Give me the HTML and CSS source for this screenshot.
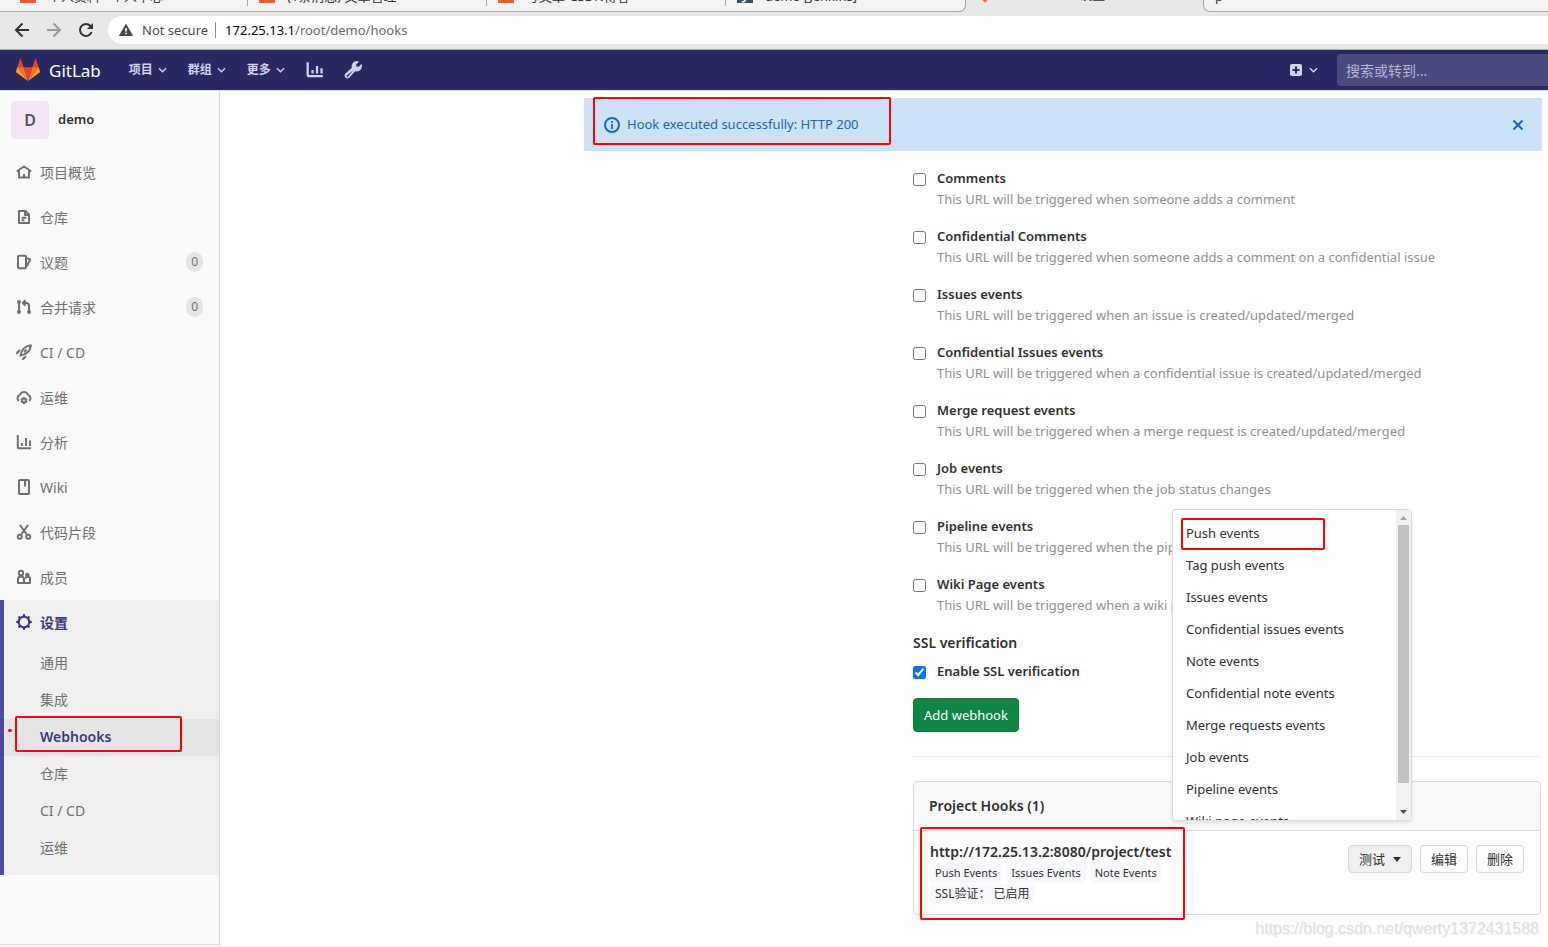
FILE: index.html
```html
<!DOCTYPE html>
<html lang="zh-CN">
<head>
<meta charset="utf-8">
<title>Webhooks · 设置 · demo</title>
<link rel="stylesheet" href="styles.css">
</head>
<body>
<header class="browser">
  <div class="tabs">
    <div class="tab-group tab-group-left">
      <div class="tab"><span class="favicon">C</span><span>个人资料 - 个人中心</span></div>
      <div class="tab"><span class="favicon">C</span><span>(1条消息) 文章管理</span></div>
      <div class="tab"><span class="favicon">C</span><span>写文章-CSDN博客</span></div>
      <div class="tab"><span class="favicon favicon-dark">J</span><span>demo [Jenkins]</span></div>
    </div>
    <div class="tab tab-active"><span class="favicon-diamond"></span><span>Webhooks · 设置 ·</span></div>
    <div class="tab-group tab-group-right"><div class="tab"><span>p</span></div></div>
  </div>
  <div class="toolbar">
    <button class="tool" aria-label="Back"><svg width="16" height="16" viewBox="0 0 16 16" fill="none" stroke="#2e3436" stroke-width="2"><path d="M15 8H2M8.500 1.500 2 8l6.500 6.500"/></svg></button>
    <button class="tool" aria-label="Forward"><svg width="16" height="16" viewBox="0 0 16 16" fill="none" stroke="#989896" stroke-width="2"><path d="M1 8h13M7.500 1.500 14 8l-6.500 6.500"/></svg></button>
    <button class="tool" aria-label="Reload"><svg width="16" height="16" viewBox="0 0 16 16" fill="none" stroke="#2e3436" stroke-width="2"><path d="M13.600 10A6 6 0 1 1 12.500 4L14 5.500"/><path d="M15 1v6H9z" fill="#2e3436" stroke="none"/></svg></button>
    <div class="omnibox">
      <svg width="16" height="16" viewBox="0 0 16 16"><path fill="#4a4a4a" d="M8 1.500 15.200 14H.8z"/><path stroke="#fff" stroke-width="1.600" d="M8 6v3.500M8 10.700v1.500"/></svg>
      <span class="secure">Not secure</span>
      <span class="url"><b>172.25.13.1</b>/root/demo/hooks</span>
    </div>
  </div>
</header>

<nav class="navbar">
  <a class="brand" href="#">
    <svg width="24" height="24" viewBox="0 0 36 36"><path fill="#e24329" d="m2 14 9.380 9v-9l-4-12.280c-.205-.632-1.176-.632-1.380 0z"/><path fill="#e24329" d="m34 14-9.380 9v-9l4-12.280c.205-.632 1.176-.632 1.380 0z"/><path fill="#e24329" d="M18 34.380 11.380 14h13.240z"/><path fill="#fc6d26" d="M18 34.380 11.380 14H2l6 7.500zM18 34.380 24.620 14H34l-6 7.500z"/><path fill="#fca326" d="M2 14 .1 20.160c-.18.565 0 1.200.5 1.560L18 34.380zM34 14l1.900 6.160c.18.565 0 1.200-.5 1.560L18 34.380z"/></svg>
    <span>GitLab</span>
  </a>
  <button class="menu">项目<svg class="chev" viewBox="0 0 10 6"><path d="m1 1 4 4 4-4"/></svg></button>
  <button class="menu">群组<svg class="chev" viewBox="0 0 10 6"><path d="m1 1 4 4 4-4"/></svg></button>
  <button class="menu">更多<svg class="chev" viewBox="0 0 10 6"><path d="m1 1 4 4 4-4"/></svg></button>
  <a class="nav-icon" href="#" aria-label="分析"><svg class="line" width="18" height="18" viewBox="0 0 16 16"><path d="M1.500 1v11.500a1 1 0 0 0 1 1H15M5.800 8v3M9.800 4.500V11M13.800 6.500V11"/></svg></a>
  <a class="nav-icon" href="#" aria-label="管理"><svg width="18" height="18" viewBox="0 0 16 16"><path fill="currentColor" fill-rule="evenodd" d="M11.300 0c.9 0 1.500.2 2 .6L10.800 3l.3 1.900 1.900.3 2.400-2.500c.4.6.6 1.200.6 2A4.700 4.700 0 0 1 9.900 9L4.600 14.800a2.500 2.500 0 0 1-3.500-3.500L7 6.100A4.700 4.700 0 0 1 11.300 0zM8 8.500 2.500 12.900a.7.700 0 0 0 1 1z"/></svg></a>
  <button class="menu plus" aria-label="新建"><svg width="12" height="12" viewBox="0 0 12 12"><rect width="12" height="12" rx="2" fill="currentColor"/><path stroke="#292961" stroke-width="2" d="M6 2.500v7M2.500 6h7"/></svg><svg class="chev" viewBox="0 0 10 6"><path d="m1 1 4 4 4-4"/></svg></button>
  <input class="search" type="search" aria-label="搜索" placeholder="搜索或转到...">
</nav>

<div class="layout">
  <aside class="sidebar">
    <a class="project" href="#"><span class="avatar">D</span><span>demo</span></a>
    <a class="item" href="#"><svg class="line" viewBox="0 0 16 16"><path d="M.8 7.500 8 2.500l7.200 5M3 7v6.500h10V7M8 13.500V10"/></svg>项目概览</a>
    <a class="item" href="#"><svg class="line" viewBox="0 0 16 16"><path d="M3 2h6.500L13 5.500V14H3zM9 2v4h4M5.500 8.700h5M5.500 11.200h3"/></svg>仓库</a>
    <a class="item" href="#"><svg class="line" viewBox="0 0 16 16"><path d="M2 2.800a1 1 0 0 1 1-1h6a1 1 0 0 1 1 1v10.400a1 1 0 0 1-1 1H3a1 1 0 0 1-1-1zM10.500 4l3.700 1.500L11 12"/></svg>议题<span class="badge">0</span></a>
    <a class="item" href="#"><svg class="line" viewBox="0 0 16 16"><path d="M3 3v10M13 13V7a3 3 0 0 0-3-3H7.500M9.500 1.200 6.800 4l2.700 2.800"/><g fill="currentColor" stroke="none"><circle cx="3" cy="3" r="2"/><circle cx="3" cy="13" r="2"/><circle cx="13" cy="13" r="2"/></g></svg>合并请求<span class="badge">0</span></a>
    <a class="item" href="#"><svg class="line" viewBox="0 0 16 16"><path d="M4.500 11.500C5 6 9 2 14.800 1.200 14.500 7 10 11 4.500 11.500zM8 8l2.500-2.500"/><path fill="currentColor" stroke="none" d="M0 10c0-2.500 2-4.500 4.800-4.500L2.800 9 .8 10.200zM6 16c2.500 0 4.500-2 4.500-4.800L7 13.200 5.800 15z"/></svg>CI / CD</a>
    <a class="item" href="#"><svg class="line" viewBox="0 0 16 16"><path d="M3 11.800A3.200 3.200 0 0 1 3.800 6a4.500 4.500 0 0 1 8.400 0 3.200 3.200 0 0 1 .8 5.800"/><circle cx="8" cy="11.500" r="2"/><path d="M8 8v1.500M8 13.500V15M5 9.800l1.200.7M9.800 12.500l1.200.7M5 13.200l1.200-.7M9.800 10.500l1.200-.7"/></svg>运维</a>
    <a class="item" href="#"><svg class="line" viewBox="0 0 16 16"><path d="M1.800 1v12.200a1 1 0 0 0 1 1H15M6 9v3M10 4v8M14 6.500V12"/></svg>分析</a>
    <a class="item" href="#"><svg class="line" viewBox="0 0 16 16"><rect x="3" y="1" width="10" height="14" rx="1"/><path d="M9 1v6.500"/></svg>Wiki</a>
    <a class="item" href="#"><svg class="line" viewBox="0 0 16 16"><circle cx="3.800" cy="12.800" r="2"/><circle cx="12.200" cy="12.800" r="2"/><path d="M4 1l7.200 10M12 1 4.800 11"/></svg>代码片段</a>
    <a class="item" href="#"><svg class="line" viewBox="0 0 16 16"><circle cx="5" cy="4" r="2.200"/><path d="M2 14v-3.500a3 3 0 0 1 6 0V14zM9.500 9.500a2.200 2.200 0 0 1 4.500 1V14H8"/><circle cx="11.300" cy="6" r="1.200"/></svg>成员</a>
    <div class="section">
      <a class="item item-current" href="#"><svg viewBox="0 0 16 16" fill="none" stroke="currentColor"><circle cx="8" cy="8" r="5.300" stroke-width="2"/><path stroke-width="2.400" stroke-linecap="round" d="M8 1.300v.7M8 14v.7M1.300 8H2M14 8h.7M3.300 3.300l.5.5M12.200 12.200l.5.5M3.300 12.700l.5-.5M12.200 3.800l.5-.5"/></svg>设置</a>
      <a class="sub" href="#">通用</a>
      <a class="sub" href="#">集成</a>
      <a class="sub sub-current" href="#">Webhooks<span class="mark mark-sub"></span><span class="dot"></span></a>
      <a class="sub" href="#">仓库</a>
      <a class="sub" href="#">CI / CD</a>
      <a class="sub" href="#">运维</a>
    </div>
    <div class="sidebar-foot"></div>
  </aside>

  <main class="main">
    <div class="container">
      <div class="flash" role="status">
        <svg width="16" height="16" viewBox="0 0 16 16" fill="none" stroke="currentColor" stroke-width="2"><circle cx="8" cy="8" r="7"/><path d="M8 7v5M8 4v2" stroke-width="1.800"/></svg>
        <span>Hook executed successfully: HTTP 200</span>
        <button class="close" aria-label="关闭"><svg width="12" height="12" viewBox="0 0 12 12" stroke="currentColor" stroke-width="2"><path d="m1.500 1.500 9 9M10.500 1.500l-9 9"/></svg></button>
        <span class="mark mark-flash"></span>
      </div>
      <div class="column">
        <div class="clipped"><p class="desc">This URL will be triggered by a push to the repository</p></div>
        <div class="event"><input type="checkbox" id="e0"><label for="e0">Tag push events</label><p class="desc">This URL will be triggered when a new tag is pushed to the repository</p></div>
        <div class="event"><input type="checkbox" id="e1"><label for="e1">Comments</label><p class="desc">This URL will be triggered when someone adds a comment</p></div>
        <div class="event"><input type="checkbox" id="e2"><label for="e2">Confidential Comments</label><p class="desc">This URL will be triggered when someone adds a comment on a confidential issue</p></div>
        <div class="event"><input type="checkbox" id="e3"><label for="e3">Issues events</label><p class="desc">This URL will be triggered when an issue is created/updated/merged</p></div>
        <div class="event"><input type="checkbox" id="e4"><label for="e4">Confidential Issues events</label><p class="desc">This URL will be triggered when a confidential issue is created/updated/merged</p></div>
        <div class="event"><input type="checkbox" id="e5"><label for="e5">Merge request events</label><p class="desc">This URL will be triggered when a merge request is created/updated/merged</p></div>
        <div class="event"><input type="checkbox" id="e6"><label for="e6">Job events</label><p class="desc">This URL will be triggered when the job status changes</p></div>
        <div class="event"><input type="checkbox" id="e7"><label for="e7">Pipeline events</label><p class="desc">This URL will be triggered when the pipeline status changes</p></div>
        <div class="event"><input type="checkbox" id="e8"><label for="e8">Wiki Page events</label><p class="desc">This URL will be triggered when a wiki page is created/updated</p></div>
        <h2 class="heading">SSL verification</h2>
        <div class="event"><input type="checkbox" id="ssl" checked><label for="ssl">Enable SSL verification</label></div>
        <button class="add">Add webhook</button>
        <hr>
        <section class="card">
          <h2 class="card-head">Project Hooks (1)</h2>
          <div class="card-body">
            <div class="hook">
              <div class="hook-url">http://172.25.13.2:8080/project/test</div>
              <div class="chips"><span class="chip">Push Events</span><span class="chip">Issues Events</span><span class="chip">Note Events</span></div>
              <div class="chips"><span class="chip chip-cjk">SSL验证： 已启用</span></div>
              <span class="mark mark-hook"></span>
            </div>
            <div class="actions">
              <div class="test">
                <button class="btn btn-open">测试<svg width="8" height="5" viewBox="0 0 8 5"><path fill="currentColor" d="M0 0h8L4 5z"/></svg></button>
                <div class="dropdown">
                  <div class="options">
                    <a href="#">Push events<span class="mark mark-option"></span></a>
                    <a href="#">Tag push events</a>
                    <a href="#">Issues events</a>
                    <a href="#">Confidential issues events</a>
                    <a href="#">Note events</a>
                    <a href="#">Confidential note events</a>
                    <a href="#">Merge requests events</a>
                    <a href="#">Job events</a>
                    <a href="#">Pipeline events</a>
                    <a href="#">Wiki page events</a>
                  </div>
                  <div class="scroll">
                    <svg width="15" height="15" viewBox="0 0 15 15"><path fill="#a3a3a3" d="M4 10h7L7.500 6z"/></svg>
                    <div class="thumb"></div>
                    <svg width="15" height="15" viewBox="0 0 15 15"><path fill="#505050" d="M4 5h7L7.500 9z"/></svg>
                  </div>
                </div>
              </div>
              <button class="btn">编辑</button>
              <button class="btn">删除</button>
            </div>
          </div>
        </section>
      </div>
    </div>
    <div class="watermark">https://blog.csdn.net/qwerty1372431588</div>
  </main>
</div>
</body>
</html>
```
FILE: styles.css
```css
* { box-sizing: border-box; }
body {
  margin: 0;
  min-height: 100vh;
  display: flex;
  flex-direction: column;
  overflow: hidden;
  background: #fff;
  color: #303030;
  font: 14px/21px "Noto Sans", "Noto Sans CJK SC", sans-serif;
}
a { color: inherit; text-decoration: none; }
button, input { font: inherit; color: inherit; margin: 0; }
button { border: 0; background: none; padding: 0; }
h2, p { margin: 0; font-size: 14px; }

/* browser chrome */
.browser { background: #e8e8e6; border-bottom: 1px solid #b0b0ac; }
.tabs { display: flex; height: 12px; overflow: hidden; }
.tab-group { display: flex; background: #f3f3f3; border-bottom: 1px solid #a5a5a1; }
.tab-group-left { padding-left: 9px; border-right: 1px solid #a5a5a1; border-bottom-right-radius: 7px; }
.tab-group-right { flex: 1; border-left: 1px solid #a5a5a1; border-bottom-left-radius: 7px; }
.tab {
  width: 239px;
  height: 6px;
  padding-left: 11px;
  display: flex;
  align-items: flex-end;
  gap: 12px;
  font-size: 13px;
  line-height: 20px;
  white-space: nowrap;
  color: #2e3436;
}
.tab-group-left .tab:not(:last-child) { border-right: 1px solid #a5a5a1; }
.tab-active { width: 237px; height: 4px; }
.favicon { width: 16px; height: 16px; margin-bottom: 3px; background: #fc5531; color: #fff; line-height: 16px; text-align: center; font-weight: 700; }
.favicon-dark { background: #335061; }
.favicon-diamond { width: 8px; height: 8px; margin: 0 4px 3px; background: #fc6d26; transform: rotate(45deg); }
.toolbar { display: flex; align-items: center; height: 37px; padding: 0 0 1px 14px; gap: 16px; }
.tool { display: flex; }
.omnibox { flex: 1; height: 28px; margin-left: -2px; padding-left: 10px; display: flex; align-items: center; background: #fff; border-radius: 14px 0 0 14px; font-size: 13px; }
.secure { margin-left: 8px; padding-right: 7px; line-height: 16px; border-right: 1px solid #8a8a88; color: #4a4a4a; }
.url { margin-left: 9px; color: #6a6a6a; }
.url b { font-weight: 400; color: #000; }

/* top navigation */
.navbar { display: flex; align-items: center; height: 40px; padding-left: 16px; background: #292961; color: #d1d1f0; }
.brand { display: flex; align-items: center; gap: 9px; color: #fff; font-size: 17px; margin-right: 28px; }
.menu { display: flex; align-items: center; gap: 5px; margin-right: 21px; font-size: 12px; line-height: 20px; font-weight: 700; }
.chev { width: 9px; height: 6px; fill: none; stroke: currentColor; stroke-width: 1.500; }
.nav-icon { display: flex; margin-right: 20px; }
.line { fill: none; stroke: currentColor; stroke-width: 2; stroke-linejoin: round; }
.plus { margin: 0 19px 0 auto; gap: 7px; }
.search { width: 211px; height: 32px; padding: 0 9px; border: 0; border-radius: 4px 0 0 4px; background: #4b4b7d; }
.search::placeholder { color: #b5b5d3; opacity: 1; }

.layout { flex: 1; display: flex; border-top: 1px solid #dfdfdf; }

/* sidebar */
.sidebar { width: 220px; display: flex; flex-direction: column; background: #fafafa; border-right: 1px solid #dbdbdb; color: #707070; }
.project { display: flex; align-items: center; gap: 9px; height: 59px; padding: 0 0 2px 11px; color: #303030; font-size: 13px; font-weight: 600; }
.avatar { width: 38px; height: 38px; border-radius: 4px; background: #f3e5f5; color: #555; font-size: 16px; line-height: 38px; text-align: center; }
.item { display: flex; align-items: center; gap: 8px; height: 45px; padding: 0 16px 1px; }
.item svg { width: 16px; height: 16px; flex: none; }
.badge { margin-left: auto; padding: 0 5px; border-radius: 10px; background: #e5e5e5; font-size: 12px; line-height: 20px; }
.section { padding-bottom: 8px; background: #efefef; box-shadow: inset 4px 0 #4b4ba3; }
.item-current { color: #393982; font-weight: 700; }
.sub { display: block; height: 37px; padding-left: 40px; line-height: 35px; }
.sub-current { position: relative; background: rgba(0, 0, 0, .04); color: #393982; font-weight: 600; }
.sidebar-foot { margin-top: auto; height: 3px; border-top: 1px solid #dbdbdb; }

/* content */
.main { flex: 1; position: relative; padding-right: 7px; }
.container { position: relative; max-width: 957px; margin-left: auto; font-size: 13px; }
.flash { position: absolute; z-index: 1; top: 7px; left: 0; right: -1px; height: 53px; padding: 0 18px 0 20px; display: flex; align-items: center; gap: 7px; background: #cbe2f9; color: #1b69b6; }
.close { display: flex; margin-left: auto; }
.column { padding-left: 329px; }
.clipped { display: flex; align-items: flex-end; height: 3px; margin-bottom: 16px; overflow: hidden; }
.clipped .desc { margin-left: 24px; }
.event { display: grid; grid-template-columns: 24px 1fr; align-items: center; margin-bottom: 16px; }
.event input { width: 13px; height: 13px; margin-top: 2px; }
.event label, .heading { font-weight: 600; }
.desc { grid-column: 2; font-size: 13px; color: #919191; white-space: nowrap; }
.heading { margin-bottom: 8px; }
.add { display: block; height: 34px; padding: 0 10px; border: 1px solid #0e7c40; border-radius: 4px; background: #108548; color: #fff; }
hr { margin: 24px 0; border: 0; border-top: 1px solid #eaeaea; }
.card { border: 1px solid #dbdbdb; border-radius: 4px; }
.card-head { padding: 13px 15px 14px; border-bottom: 1px solid #dbdbdb; border-radius: 4px 4px 0 0; background: #fafafa; font-weight: 600; }
.card-body { display: flex; justify-content: space-between; padding: 10px 16px; }
.hook { position: relative; }
.hook-url { font-size: 14px; font-weight: 600; }
.chips { display: flex; gap: 4px; margin-top: 1px; }
.chip { padding: 0 5px; border-radius: 4px; background: #f8f9fc; font-size: 11px; line-height: 20px; }
.chip-cjk { font-size: 12px; }
.actions { display: flex; align-items: flex-start; gap: 8px; padding-top: 4px; }
.test { position: relative; }
.btn { display: flex; align-items: center; gap: 8px; height: 28px; padding: 0 10px; border: 1px solid #dbdbdb; border-radius: 4px; background: #fff; font-size: 13px; }
.btn-open { background: #f0f0f0; }
.dropdown { position: absolute; z-index: 2; right: 0; bottom: calc(100% + 24px); width: 240px; height: 312px; display: flex; overflow: hidden; border: 1px solid #dbdbdb; border-radius: 4px; background: #fff; box-shadow: 0 2px 4px rgba(0, 0, 0, .1); }
.options { flex: 1; padding-top: 7px; }
.options a { position: relative; display: block; padding-left: 13px; line-height: 32px; }
.scroll { width: 15px; display: flex; flex-direction: column; background: #f1f1f1; }
.scroll svg { flex: none; }
.thumb { width: 11px; height: 258px; margin: 0 auto auto; background: #c1c1c1; }

/* red annotations laid over the page */
.mark { position: absolute; border: 2px solid #f00; border-radius: 2px; }
.mark-flash { left: 9px; top: -1px; width: 298px; height: 48px; }
.mark-sub { left: 15px; top: -3px; width: 167px; height: 36px; }
.dot { position: absolute; left: 8px; top: 10px; width: 4px; height: 3px; border-radius: 2px; background: #f00; }
.mark-option { left: 8px; top: 1px; width: 144px; height: 32px; }
.mark-hook { left: -10px; top: -14px; width: 265px; height: 93px; }
.watermark { position: absolute; right: 9px; bottom: 7px; color: #e2e2e2; font: 16px/22px "Liberation Sans", Arial, sans-serif; text-shadow: 1px 1px 1px #f2f2f2; }
```
